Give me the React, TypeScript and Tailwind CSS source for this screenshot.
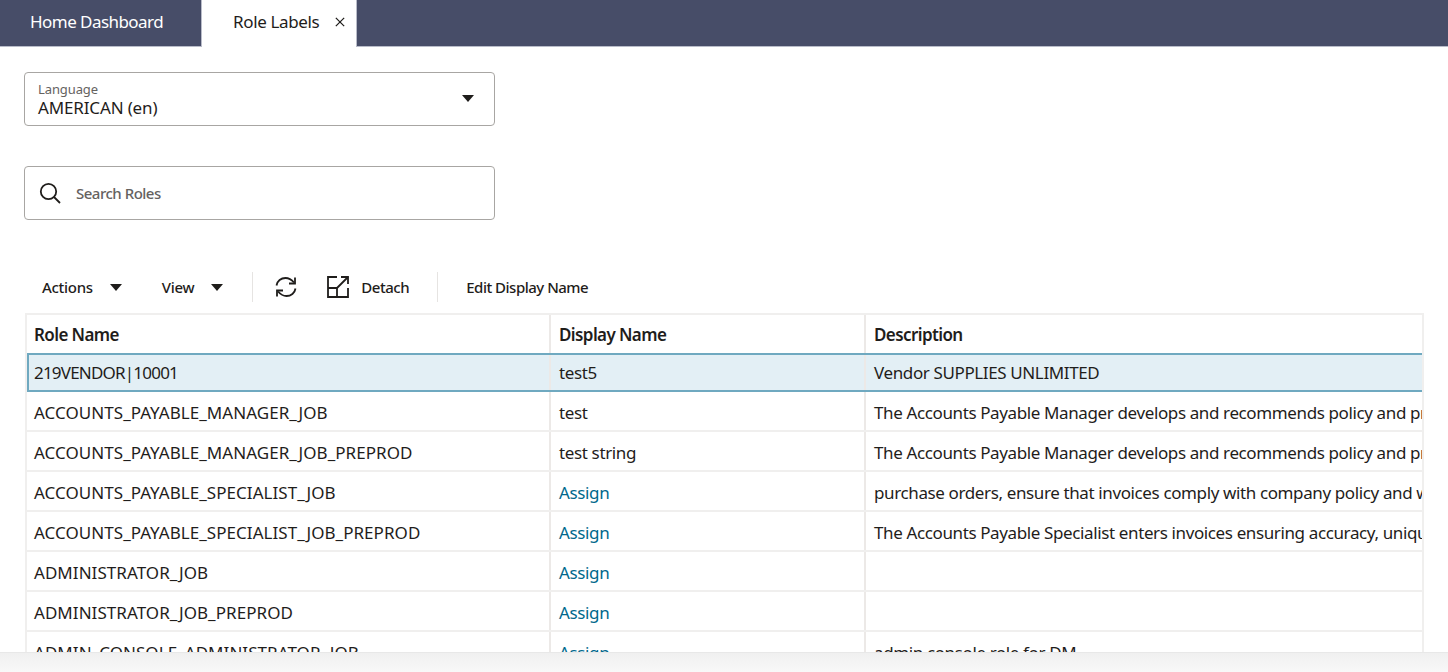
import React from "react";

const rows: [string, string, string][] = [
  ["ACCOUNTS_PAYABLE_MANAGER_JOB", "test", "The Accounts Payable Manager develops and recommends policy and procedures for the payables team"],
  ["ACCOUNTS_PAYABLE_MANAGER_JOB_PREPROD", "test string", "The Accounts Payable Manager develops and recommends policy and procedures for the payables team"],
  ["ACCOUNTS_PAYABLE_SPECIALIST_JOB", "Assign", "purchase orders, ensure that invoices comply with company policy and within terms of the agreement"],
  ["ACCOUNTS_PAYABLE_SPECIALIST_JOB_PREPROD", "Assign", "The Accounts Payable Specialist enters invoices ensuring accuracy, uniqueness and compliance"],
  ["ADMINISTRATOR_JOB", "Assign", ""],
  ["ADMINISTRATOR_JOB_PREPROD", "Assign", ""],
  ["ADMIN_CONSOLE_ADMINISTRATOR_JOB", "Assign", "admin console role for DM"],
];

const Caret = ({ className }: { className: string }) => (
  <svg viewBox="0 0 12 7" className={className}>
    <path d="M0 0h12L6 7z" fill="#1f1d1b" />
  </svg>
);

function Row({ r, selected }: { r: [string, string, string]; selected?: boolean }) {
  const base = "min-w-0 overflow-hidden whitespace-nowrap flex items-center " + (selected ? "pt-px " : "pt-1 ");
  return (
    <div
      className={
        selected
          ? "grid grid-cols-[520px_315px_1fr] h-[39px] shrink-0 bg-[#e3eff5] border-y-2 border-l-2 border-[#6fa9c0]"
          : "grid grid-cols-[522px_315px_1fr] h-10 shrink-0 border-b-2 border-[#f0efee]"
      }
    >
      <div className={base + (selected ? "pl-[5px] tracking-[-0.8px]" : "pl-[7px] tracking-[0.05px]")}>{r[0]}</div>
      <div className={base + "pl-2 border-l-2 border-[#ece9e7] tracking-[-0.36px]"}>
        <span className={r[1] === "Assign" ? "text-[#00688c]" : ""}>{r[1]}</span>
      </div>
      <div className={base + "pl-2 border-l-2 border-[#ece9e7] tracking-[-0.38px]"}>{r[2]}</div>
    </div>
  );
}

export default function App() {
  return (
    <div className="h-[672px] w-[1448px] overflow-hidden bg-white flex flex-col text-[17px] text-[#1f1d1b] font-['Noto_Sans',sans-serif]">
      <header className="h-[47px] shrink-0 flex bg-[#474d68] border-b border-[#b9bcc9]">
        <div className="w-[201px] flex items-center pl-[30px] pb-[2px] text-white tracking-[-0.55px]">Home Dashboard</div>
        <div className="w-[156px] h-[47px] bg-white border-x border-[#b9bcc9] flex items-center pl-[31px] pb-[3px]">
          <span className="tracking-[-0.36px]">Role Labels</span>
          <svg viewBox="0 0 12 12" className="w-[10px] h-[10px] ml-4">
            <path d="M1 1l10 10M11 1L1 11" stroke="#1f1d1b" strokeWidth="1.5" />
          </svg>
        </div>
      </header>

      <main className="flex-1 min-h-0 flex flex-col px-6">
        <div className="mt-[25px] w-[471px] h-[54px] shrink-0 rounded border border-[#a8a6a3] flex items-center pl-[13px] pr-[20px]">
          <div className="flex-1 leading-none mt-1">
            <div className="text-[13px] leading-[14px] text-[#65625f] tracking-[-0.1px]">Language</div>
            <div className="leading-[24px] tracking-[-0.15px]">AMERICAN (en)</div>
          </div>
          <Caret className="w-3 h-[7px] -mt-px" />
        </div>

        <div className="mt-10 w-[471px] h-[54px] shrink-0 rounded border border-[#a8a6a3] flex items-center pl-[14px]">
          <svg viewBox="0 0 22 22" className="w-[22px] h-[22px] -mt-px" fill="none" stroke="#1f1d1b" strokeWidth="1.8">
            <circle cx="9.5" cy="9.5" r="7.7" />
            <path d="M15 15l6 6" />
          </svg>
          <span className="ml-[15px] text-[15px] font-medium text-[#65625f] tracking-[-0.5px]">Search Roles</span>
        </div>

        <div className="mt-[50px] h-[34px] shrink-0 flex items-center text-[15px] font-medium tracking-[-0.3px]">
          <span className="ml-[18px]">Actions</span>
          <Caret className="w-3 h-[7px] ml-[17px]" />
          <span className="ml-[40px]">View</span>
          <Caret className="w-3 h-[7px] ml-[17px]" />
          <div className="ml-[29px] w-px h-[30px] bg-[#e6e4e2]" />
          <svg viewBox="0 0 24 24" className="ml-[21px] w-6 h-6" fill="none" stroke="#1f1d1b" strokeWidth="1.8">
            <path d="M2.5 10.5C3.2 6 7 3 11.5 3c3.6 0 6 1.6 8.5 4.5" />
            <path d="M21 2.5v6h-6" />
            <path d="M21.5 13.5C20.8 18 17 21 12.5 21c-3.6 0-6-1.6-8.5-4.5" />
            <path d="M3 21.5v-6h6" />
          </svg>
          <svg viewBox="0 0 24 24" className="ml-7 w-6 h-6" fill="none" stroke="#1f1d1b" strokeWidth="1.8">
            <path d="M11 2H2v20h20v-9" />
            <path d="M2 13h9v9" />
            <path d="M11 13L22 2" />
            <path d="M15 2h7v7" />
          </svg>
          <span className="ml-[11px] tracking-[-0.45px]">Detach</span>
          <div className="ml-7 w-px h-[30px] bg-[#e6e4e2]" />
          <span className="ml-[28px] tracking-[-0.5px]">Edit Display Name</span>
        </div>

        <div className="mt-[9px] w-[1399px] flex-1 min-h-0 overflow-hidden flex flex-col border-x-2 border-t-2 border-[#f0efee] box-border ml-px">
          <div className="grid grid-cols-[522px_315px_1fr] h-[38px] shrink-0 font-semibold tracking-[-0.6px]">
            <div className="pl-[7px] pt-px flex items-center">Role Name</div>
            <div className="pl-2 pt-px flex items-center border-l-2 border-[#ece9e7]">Display Name</div>
            <div className="pl-2 pt-px flex items-center border-l-2 border-[#ece9e7]">Description</div>
          </div>
          <Row r={["219VENDOR|10001", "test5", "Vendor SUPPLIES UNLIMITED"]} selected />
          {rows.map((r) => (
            <Row key={r[0]} r={r} />
          ))}
        </div>
      </main>

      <footer className="h-5 shrink-0 bg-gradient-to-b from-[#f0f0f0] to-[#f8f8f8] border-t border-[#e8e8e8]" />
    </div>
  );
}
